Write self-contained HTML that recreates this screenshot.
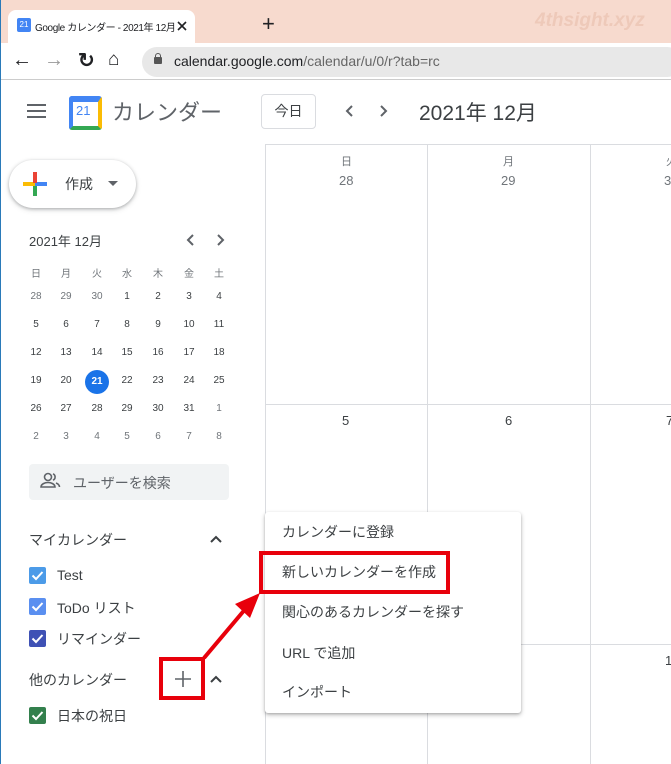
<!DOCTYPE html><html><head><meta charset="utf-8"><style>
*{margin:0;padding:0;box-sizing:border-box}
body{width:671px;height:764px;overflow:hidden;background:#fff;font-family:"Liberation Sans","Noto Sans CJK JP",sans-serif;color:#3c4043;position:relative}
.a{position:absolute}
.mc{position:absolute;width:20px;text-align:center;font-size:10px;color:#3c4043}
.g{color:#70757a}
.cb{position:absolute;width:17px;height:17px;border-radius:2px}
.cb svg{position:absolute;left:2px;top:3px}
.mi{position:absolute;left:282px;font-size:14px;color:#3c4043}
</style></head><body>
<div class="a" style="left:0;top:0;width:671px;height:43px;background:#f7dace"></div>
<div class="a" style="left:8px;top:10px;width:187px;height:34px;background:#fff;border-radius:8px 8px 0 0"></div>
<div class="a" style="left:17px;top:18px;width:14px;height:14px;background:#4285f4;border-radius:2px;color:#fff;font-size:8px;text-align:center;line-height:14px">21</div>
<div class="a" style="left:35px;top:19px;font-size:10px;letter-spacing:-0.4px;color:#202124;white-space:nowrap">Google カレンダー - 2021年 12月</div>
<svg class="a" style="left:177px;top:21px" width="10" height="10"><path d="M1 1l8 8M9 1l-8 8" stroke="#202124" stroke-width="1.6"/></svg>
<div class="a" style="left:262px;top:11px;font-size:22px;color:#202124">+</div>
<div class="a" style="left:535px;top:10px;font-size:19px;font-style:italic;font-weight:bold;color:#eec9b9">4thsight.xyz</div>
<div class="a" style="left:0;top:43px;width:671px;height:37px;background:#fff"></div>
<div class="a" style="left:12px;top:49px;font-size:20px;color:#202124">←</div>
<div class="a" style="left:44px;top:49px;font-size:20px;color:#999">→</div>
<div class="a" style="left:78px;top:48px;font-size:20px;font-weight:bold;color:#202124">↻</div>
<div class="a" style="left:108px;top:49px;font-size:19px;color:#202124">⌂</div>
<div class="a" style="left:142px;top:47px;width:540px;height:30px;background:#e8e8e8;border-radius:15px"></div>
<div class="a" style="left:154px;top:57px;width:8px;height:7px;background:#555;border-radius:1px"></div>
<div class="a" style="left:155px;top:53px;width:6px;height:6px;border:1.5px solid #555;border-bottom:none;border-radius:3px 3px 0 0"></div>
<div class="a" style="left:174px;top:53px;font-size:14px;color:#202124">calendar.google.com<span style="color:#666">/calendar/u/0/r?tab=rc</span></div>
<div class="a" style="left:0;top:79px;width:671px;height:1px;background:#ccc"></div>
<div class="a" style="left:0;top:0;width:1px;height:764px;background:#2a7ab9"></div>
<div class="a" style="left:27px;top:104px;width:19px;height:2px;background:#5f6368;box-shadow:0 6px 0 #5f6368,0 12px 0 #5f6368"></div>
<div class="a" style="left:69px;top:96px;width:33px;height:34px;border-radius:3px;background:#fff;border:4px solid #4285f4;border-right-color:#fbbc04;border-bottom-color:#34a853;border-top-width:6px"></div>
<div class="a" style="left:76px;top:103px;font-size:13px;color:#4285f4">21</div>
<div class="a" style="left:112px;top:95px;font-size:22px;color:#5f6368">カレンダー</div>
<div class="a" style="left:261px;top:94px;width:55px;height:35px;border:1px solid #dadce0;border-radius:4px;font-size:14px;text-align:center;line-height:33px">今日</div>
<svg class="a" style="left:345px;top:104px" width="10" height="14"><path d="M7 2L2 7l5 5" stroke="#5f6368" stroke-width="2" fill="none"/></svg>
<svg class="a" style="left:378px;top:104px" width="10" height="14"><path d="M3 2l5 5-5 5" stroke="#5f6368" stroke-width="2" fill="none"/></svg>
<div class="a" style="left:419px;top:97px;font-size:21px;color:#3c4043">2021年 12月</div>
<div class="a" style="left:265px;top:144px;width:406px;height:1px;background:#dadce0"></div>
<div class="a" style="left:265px;top:144px;width:1px;height:620px;background:#dadce0"></div>
<div class="a" style="left:427px;top:144px;width:1px;height:620px;background:#dadce0"></div>
<div class="a" style="left:590px;top:144px;width:1px;height:620px;background:#dadce0"></div>
<div class="a" style="left:265px;top:404px;width:406px;height:1px;background:#dadce0"></div>
<div class="a" style="left:265px;top:644px;width:406px;height:1px;background:#dadce0"></div>
<div class="a" style="left:341px;top:153px;font-size:11px;color:#70757a">日</div>
<div class="a" style="left:503px;top:153px;font-size:11px;color:#70757a">月</div>
<div class="a" style="left:666px;top:153px;font-size:11px;color:#70757a">火</div>
<div class="a" style="left:339px;top:173px;font-size:13px;color:#70757a">28</div>
<div class="a" style="left:501px;top:173px;font-size:13px;color:#70757a">29</div>
<div class="a" style="left:664px;top:173px;font-size:13px;color:#70757a">30</div>
<div class="a" style="left:342px;top:413px;font-size:13px">5</div>
<div class="a" style="left:505px;top:413px;font-size:13px">6</div>
<div class="a" style="left:666px;top:413px;font-size:13px">7</div>
<div class="a" style="left:665px;top:653px;font-size:13px">1</div>
<div class="a" style="left:9px;top:160px;width:127px;height:48px;border-radius:24px;background:#fff;box-shadow:0 1px 3px rgba(60,64,67,.35),0 2px 6px rgba(60,64,67,.15)"></div>
<div class="a" style="left:23px;top:182px;width:12px;height:4px;background:#fbbc04"></div>
<div class="a" style="left:35px;top:182px;width:12px;height:4px;background:#4285f4"></div>
<div class="a" style="left:33px;top:172px;width:4px;height:11px;background:#ea4335"></div>
<div class="a" style="left:33px;top:186px;width:4px;height:10px;background:#34a853"></div>
<div class="a" style="left:65px;top:174px;font-size:14px">作成</div>
<div class="a" style="left:108px;top:181px;width:0;height:0;border:5px solid transparent;border-top-color:#5f6368"></div>
<div class="a" style="left:29px;top:231px;font-size:13px">2021年 12月</div>
<svg class="a" style="left:186px;top:234px" width="10" height="12"><path d="M7 1L2 6l5 5" stroke="#5f6368" stroke-width="2" fill="none"/></svg>
<svg class="a" style="left:215px;top:234px" width="10" height="12"><path d="M3 1l5 5-5 5" stroke="#5f6368" stroke-width="2" fill="none"/></svg>
<div id="mc"></div>
<script>
var h=["日","月","火","水","木","金","土"],xs=[26,56,87,117,148,179,209];
var rows=[[28,29,30,1,2,3,4],[5,6,7,8,9,10,11],[12,13,14,15,16,17,18],[19,20,21,22,23,24,25],[26,27,28,29,30,31,1],[2,3,4,5,6,7,8]];
var s="";h.forEach(function(t,i){s+='<div class="mc g" style="left:'+xs[i]+'px;top:265px">'+t+'</div>'});
rows.forEach(function(r,ri){r.forEach(function(n,i){var g=(ri==0&&i<3)||(ri==4&&i==6)||ri==5;var y=291+ri*28;
if(ri==3&&i==2)s+='<div class="a" style="left:85px;top:370px;width:24px;height:24px;border-radius:12px;background:#1a73e8;color:#fff;font-size:10px;font-weight:bold;text-align:center;line-height:24px">21</div>';
else s+='<div class="mc'+(g?' g':'')+'" style="left:'+xs[i]+'px;top:'+y+'px">'+n+'</div>'})});
document.getElementById("mc").innerHTML=s;
</script>
<div class="a" style="left:29px;top:464px;width:200px;height:36px;background:#f1f3f4;border-radius:4px"></div>
<svg class="a" style="left:40px;top:472px" width="22" height="18" viewBox="0 0 22 18"><circle cx="8" cy="5" r="3.5" fill="none" stroke="#5f6368" stroke-width="1.6"/><path d="M1 15c0-3 4-4.5 7-4.5s7 1.5 7 4.5z" fill="none" stroke="#5f6368" stroke-width="1.6"/><path d="M13 1.8a3.5 3.5 0 0 1 0 6.4M16 11c2 .8 3.5 2 3.5 4" fill="none" stroke="#5f6368" stroke-width="1.6"/></svg>
<div class="a" style="left:73px;top:473px;font-size:14px;color:#5f6368">ユーザーを検索</div>
<div class="a" style="left:29px;top:530px;font-size:14px">マイカレンダー</div>
<svg class="a" style="left:210px;top:535px" width="12" height="8"><path d="M1 7l5-5 5 5" stroke="#3c4043" stroke-width="2" fill="none"/></svg>
<div class="cb" style="left:29px;top:567px;background:#4c9be8"><svg width="13" height="11"><path d="M1.5 5.5l3.5 3.5 6.5-7" stroke="#fff" stroke-width="2" fill="none"/></svg></div>
<div class="a" style="left:57px;top:567px;font-size:14px">Test</div>
<div class="cb" style="left:29px;top:598px;background:#5a8ff0"><svg width="13" height="11"><path d="M1.5 5.5l3.5 3.5 6.5-7" stroke="#fff" stroke-width="2" fill="none"/></svg></div>
<div class="a" style="left:57px;top:598px;font-size:14px">ToDo リスト</div>
<div class="cb" style="left:29px;top:630px;background:#3f51b5"><svg width="13" height="11"><path d="M1.5 5.5l3.5 3.5 6.5-7" stroke="#fff" stroke-width="2" fill="none"/></svg></div>
<div class="a" style="left:57px;top:629px;font-size:14px">リマインダー</div>
<div class="a" style="left:29px;top:670px;font-size:14px">他のカレンダー</div>
<svg class="a" style="left:210px;top:675px" width="12" height="8"><path d="M1 7l5-5 5 5" stroke="#3c4043" stroke-width="2" fill="none"/></svg>
<div class="a" style="left:159px;top:657px;width:46px;height:43px;border:4px solid #e8000b"></div>
<svg class="a" style="left:174px;top:670px" width="18" height="18"><path d="M9 1v16M1 9h16" stroke="#5f6368" stroke-width="1.6"/></svg>
<div class="cb" style="left:29px;top:707px;background:#33804d"><svg width="13" height="11"><path d="M1.5 5.5l3.5 3.5 6.5-7" stroke="#fff" stroke-width="2" fill="none"/></svg></div>
<div class="a" style="left:57px;top:706px;font-size:14px">日本の祝日</div>
<div class="a" style="left:265px;top:512px;width:256px;height:201px;background:#fff;box-shadow:0 2px 5px rgba(0,0,0,.25),0 1px 2px rgba(0,0,0,.15);border-radius:3px"></div>
<div class="mi" style="top:522px">カレンダーに登録</div>
<div class="mi" style="top:562px">新しいカレンダーを作成</div>
<div class="mi" style="top:602px">関心のあるカレンダーを探す</div>
<div class="mi" style="top:643px">URL で追加</div>
<div class="mi" style="top:682px">インポート</div>
<div class="a" style="left:259px;top:551px;width:191px;height:43px;border:4px solid #e8000b"></div>
<svg class="a" style="left:195px;top:585px" width="70" height="80"><line x1="9" y1="73" x2="52" y2="22" stroke="#e8000b" stroke-width="4"/><path d="M65 8 L40 19 L55 33 Z" fill="#e8000b"/></svg>
</body></html>
